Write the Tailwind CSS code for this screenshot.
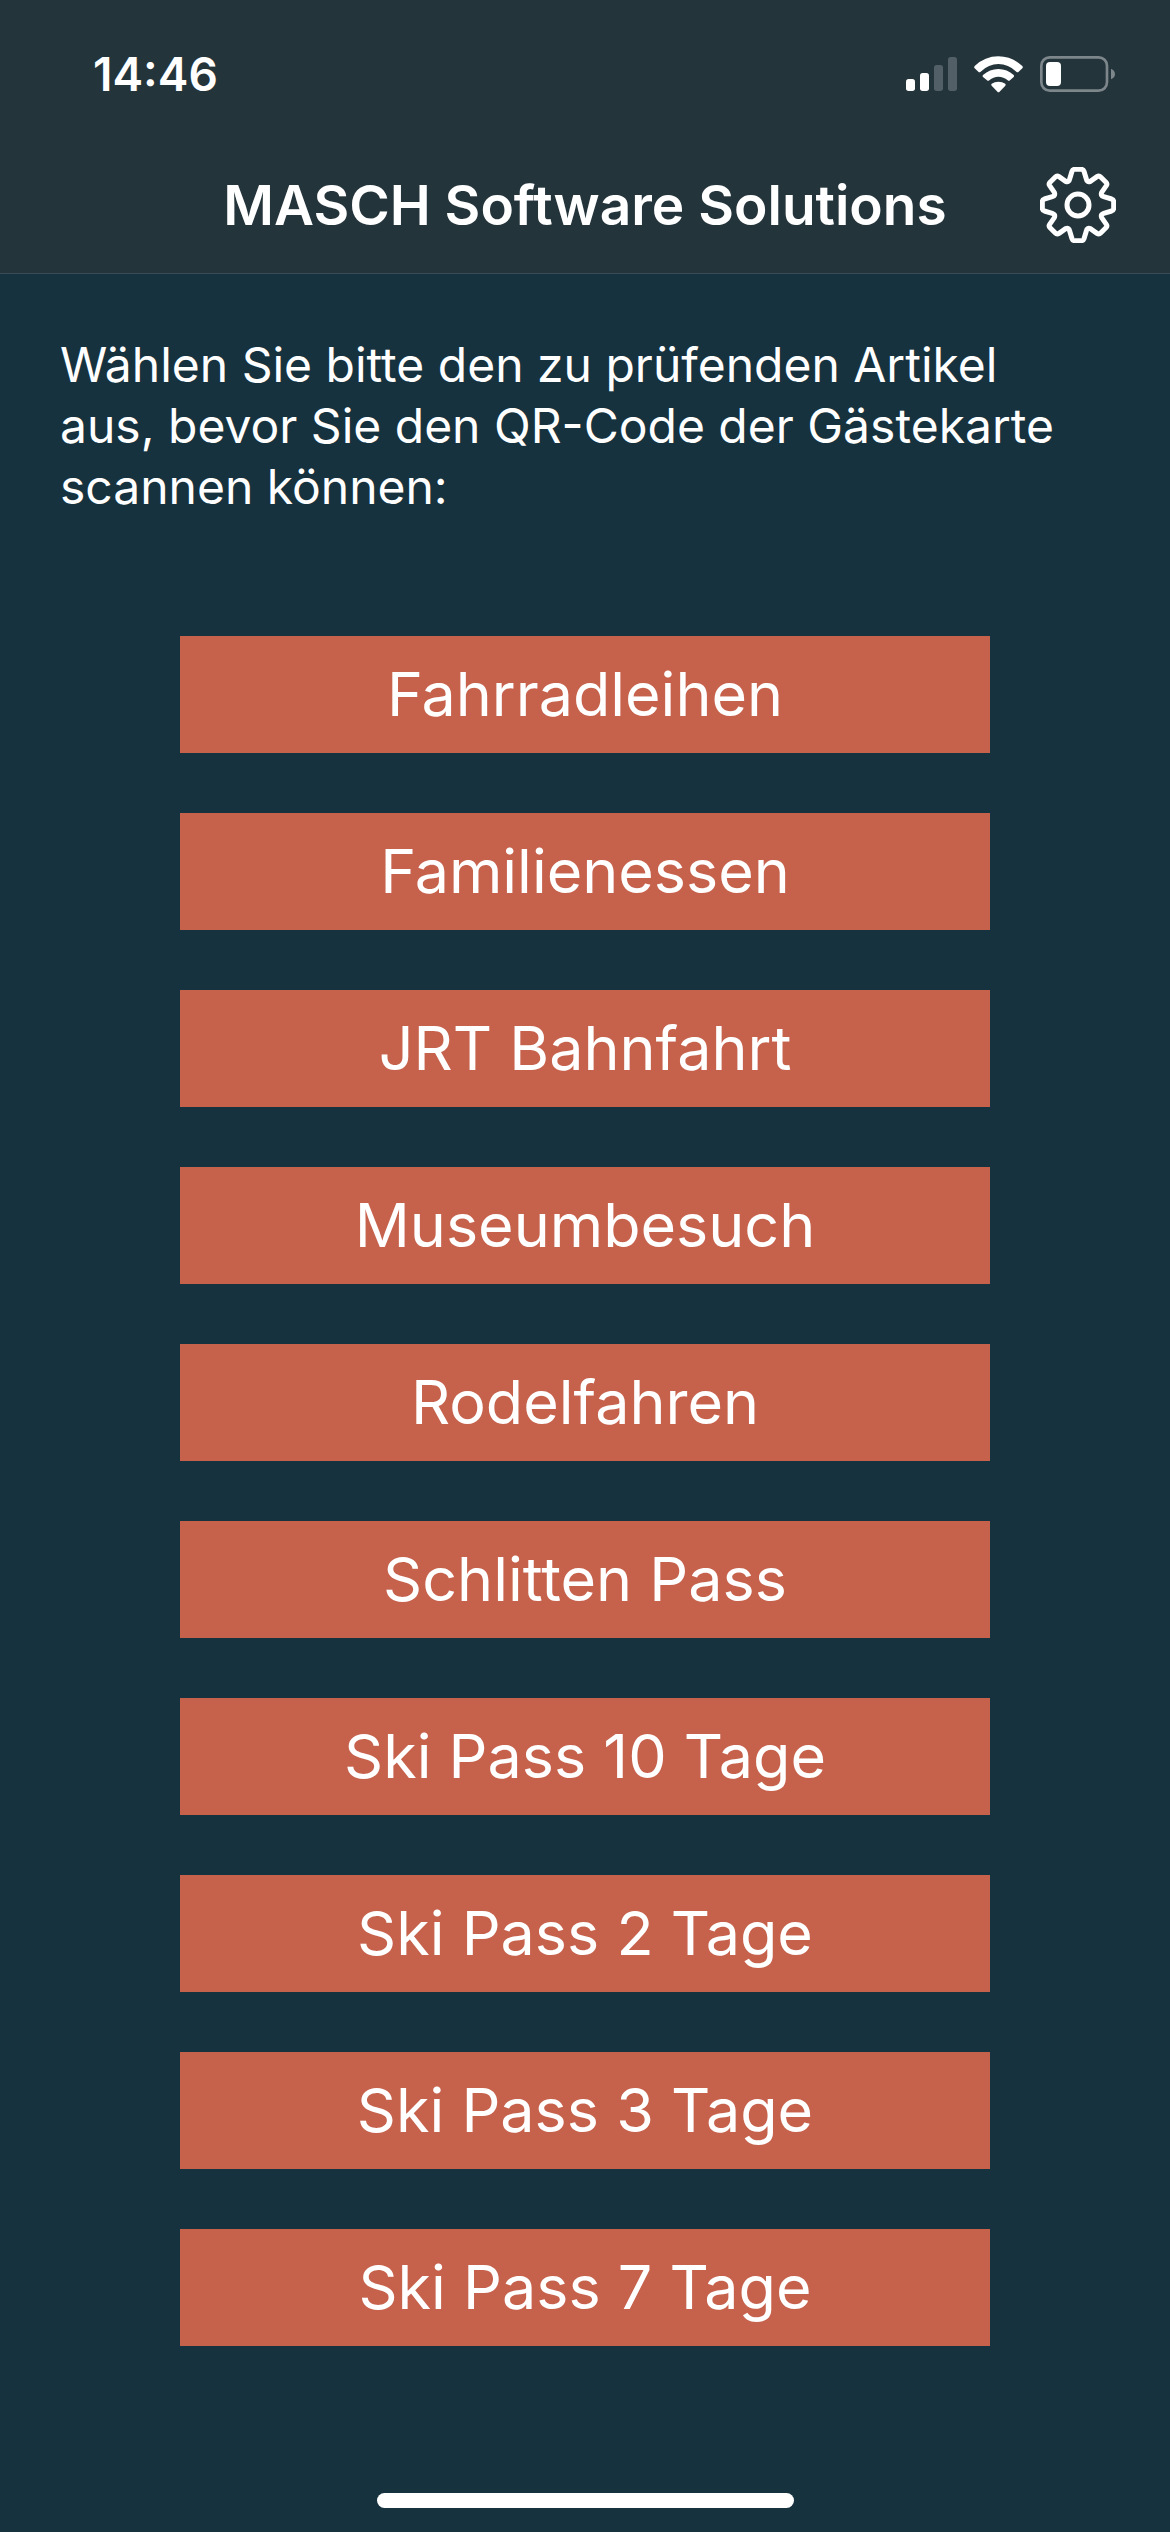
<!DOCTYPE html>
<html lang="de">
<head>
<meta charset="utf-8">
<meta name="viewport" content="width=device-width, initial-scale=1">
<title>MASCH Software Solutions</title>
<script src="https://cdn.jsdelivr.net/npm/@tailwindcss/browser@4"></script>
</head>
<body class="flex min-h-screen flex-col bg-[#16323e] font-[Inter,sans-serif] text-white">
  <header class="border-b border-[#3a4b57] bg-[#24343b]">
    <!-- Status bar -->
    <div class="flex h-[148px] items-center justify-between pr-[54px] pl-[93px]">
      <time class="text-[46px] font-semibold">14:46</time>
      <div class="flex items-center gap-[17px]">
        <svg class="h-[34px] w-[51px]" viewBox="51 51 153 102" fill="#fff" role="img" aria-label="Mobilfunk">
          <rect x="51" y="117" width="27" height="36" rx="8"/>
          <rect x="93" y="99" width="27" height="54" rx="8"/>
          <rect x="135" y="75" width="27" height="78" rx="8" fill="#525f67"/>
          <rect x="177" y="51" width="27" height="102" rx="8" fill="#525f67"/>
        </svg>
        <svg class="h-[37px] w-[49px]" viewBox="254 44 147 111" fill="#fff" role="img" aria-label="WLAN">
          <path d="M256 74Q287 45 327 45Q368 45 399 74Q402 78 399 81L388 91Q385 94 381 91Q357 68 327 68Q298 68 274 91Q270 94 267 91L256 81Q253 78 256 74Z"/>
          <path d="M281 101Q301 83 327 83Q354 83 373 101Q376 104 373 107L362 117Q359 120 355 117Q343 106 327 106Q312 106 300 117Q296 120 293 117L281 107Q278 104 281 101Z"/>
          <path d="M307 127Q316 121 327 121Q339 121 348 127Q350 130 348 133L330 152Q327 154 325 152L307 133Q304 130 307 127Z"/>
        </svg>
        <svg class="h-[36px] w-[76px]" viewBox="450 48 228 108" role="img" aria-label="Akku">
          <rect x="454" y="52" width="197" height="100" rx="25" fill="none" stroke="#7c868b" stroke-width="8"/>
          <path d="M663 86Q675 91 675 102Q675 113 663 118Z" fill="#7c868b"/>
          <rect x="468" y="66" width="45" height="72" rx="12" fill="#fff"/>
        </svg>
      </div>
    </div>
    <!-- Navigation bar -->
    <div class="grid h-[125px] grid-cols-[76px_1fr_76px] items-start px-[54px]">
      <h1 class="col-start-2 text-center text-[55px] leading-[114px] font-semibold whitespace-nowrap">MASCH Software Solutions</h1>
      <button type="button" class="mt-[19px] size-[76px]" aria-label="Einstellungen">
        <svg class="size-full" viewBox="60 51 228 228" fill="none" stroke="#fff" stroke-width="15" stroke-linejoin="round">
          <path d="M164 58H184Q190 58 192 64L199 87Q201 98 211 94L231 80Q237 76 242 81L257 96Q263 101 259 107L245 127Q241 137 251 140L275 147Q281 149 281 155V175Q281 181 275 183L251 190Q241 193 245 203L259 223Q263 229 257 234L242 249Q237 254 231 250L211 236Q201 232 199 243L192 266Q190 272 184 272H164Q158 272 156 266L149 243Q147 232 137 236L117 250Q111 254 106 249L91 234Q85 229 89 223L103 203Q107 193 97 190L73 183Q67 181 67 175V155Q67 149 73 147L97 140Q107 137 103 127L89 107Q85 101 91 96L106 81Q111 76 117 80L137 94Q147 98 149 87L156 64Q158 58 164 58Z"/>
          <circle cx="174" cy="165" r="33"/>
        </svg>
      </button>
    </div>
  </header>

  <main class="flex-1 pt-[60px]">
    <p class="pr-[90px] pl-[60px] text-[48px] leading-[61px]">Wählen Sie bitte den zu prüfenden Artikel aus, bevor Sie den QR-Code der Gästekarte scannen können:</p>
    <div class="mt-[119px] flex flex-col gap-[60px] px-[180px] text-[61px] leading-[117px]">
      <button type="button" class="bg-[#c6614c]">Fahrradleihen</button>
      <button type="button" class="bg-[#c6614c]">Familienessen</button>
      <button type="button" class="bg-[#c6614c]">JRT Bahnfahrt</button>
      <button type="button" class="bg-[#c6614c]">Museumbesuch</button>
      <button type="button" class="bg-[#c6614c]">Rodelfahren</button>
      <button type="button" class="bg-[#c6614c]">Schlitten Pass</button>
      <button type="button" class="bg-[#c6614c]">Ski Pass 10 Tage</button>
      <button type="button" class="bg-[#c6614c]">Ski Pass 2 Tage</button>
      <button type="button" class="bg-[#c6614c]">Ski Pass 3 Tage</button>
      <button type="button" class="bg-[#c6614c]">Ski Pass 7 Tage</button>
    </div>
  </main>

  <!-- Home indicator -->
  <footer class="flex justify-center pb-6">
    <div class="h-[15px] w-[417px] rounded-full bg-white"></div>
  </footer>
</body>
</html>
